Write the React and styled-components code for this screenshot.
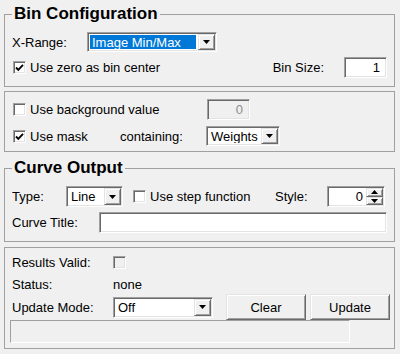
import React from 'react';
import styled, { createGlobalStyle, css } from 'styled-components';

const Global = createGlobalStyle`
  html, body { margin: 0; padding: 0; background: #f0f0f0; }
  body { font-family: "Liberation Sans", Arial, sans-serif; font-size: 13px; color: #000; }
`;

const sunken = css`
  box-sizing: border-box;
  border: 1px solid;
  border-color: #a0a0a0 #fff #fff #a0a0a0;
  box-shadow: inset 1px 1px 0 #696969, inset -1px -1px 0 #e3e3e3;
`;

const raised = css`
  box-sizing: border-box;
  border: 1px solid;
  border-color: #e3e3e3 #696969 #696969 #e3e3e3;
  box-shadow: inset 1px 1px 0 #fff, inset -1px -1px 0 #a0a0a0;
  background: #f0f0f0;
`;

const Page = styled.div`
  width: 400px;
  height: 354px;
  box-sizing: border-box;
  padding: 0 5px 0 4px;
  display: flex;
  flex-direction: column;
  background: #f0f0f0;
  overflow: hidden;
`;

const Group = styled.fieldset`
  margin: ${p => p.$mt}px 0 0 0;
  border: 1px solid #a0a0a0;
  padding: ${p => p.$pt || 0}px ${p => p.$pr ?? 7}px ${p => p.$pb}px 7px;
  min-inline-size: 0;
  display: flex;
  flex-direction: column;
`;

const Legend = styled.legend`
  padding: 0 2px;
  margin: 0;
  font-weight: bold;
  font-size: 17px;
  line-height: 20px;
`;

const Row = styled.div`
  display: flex;
  align-items: center;
  height: ${p => p.$h}px;
  margin-top: ${p => p.$mt || 0}px;
  flex-shrink: 0;
`;

const Label = styled.span`
  flex-shrink: 0;
  white-space: nowrap;
  width: ${p => (p.$w ? `${p.$w}px` : 'auto')};
  margin-left: ${p => (p.$auto ? 'auto' : '0')};
  margin-right: ${p => p.$mr || 0}px;
`;

const Field = styled.div`
  ${sunken};
  flex-shrink: 0;
  width: ${p => (p.$w ? `${p.$w}px` : 'auto')};
  flex-grow: ${p => (p.$grow ? 1 : 0)};
  height: ${p => p.$h || 21}px;
  background: ${p => (p.$disabled ? '#f0f0f0' : '#fff')};
  color: ${p => (p.$disabled ? '#8d8d8d' : '#000')};
  display: flex;
  align-items: center;
  justify-content: flex-end;
  padding: 0 6px 0 3px;
`;

const ComboBox = styled.div`
  ${sunken};
  flex-shrink: 0;
  width: ${p => p.$w}px;
  height: ${p => p.$h || 20}px;
  background: #fff;
  display: flex;
  align-items: stretch;
  padding: 1px;
`;

const ComboText = styled.span`
  flex: 1;
  display: flex;
  align-items: center;
  padding-left: 2px;
  margin: 1px 2px 1px 1px;
  white-space: nowrap;
  overflow: hidden;
  background: ${p => (p.$selected ? '#0078d7' : 'transparent')};
  color: ${p => (p.$selected ? '#fff' : '#000')};
`;

const DropBtn = styled.span`
  ${raised};
  width: 17px;
  flex-shrink: 0;
  display: flex;
  align-items: center;
  justify-content: center;
`;

const SpinBox = styled.div`
  ${sunken};
  flex-shrink: 0;
  width: ${p => p.$w}px;
  height: 21px;
  background: #fff;
  display: flex;
  align-items: stretch;
  padding: 1px;
`;

const SpinValue = styled.span`
  flex: 1;
  display: flex;
  align-items: center;
  justify-content: flex-end;
  padding-right: 3px;
`;

const SpinBtns = styled.span`
  width: 17px;
  display: flex;
  flex-direction: column;
`;

const SpinBtn = styled.span`
  ${raised};
  flex: 1;
  display: flex;
  align-items: center;
  justify-content: center;
`;

const Button = styled.div`
  ${raised};
  flex-shrink: 0;
  width: 80px;
  height: 26px;
  margin-left: ${p => p.$ml || 0}px;
  display: flex;
  align-items: center;
  justify-content: center;
`;

const Box = styled.span`
  ${sunken};
  width: 13px;
  height: 13px;
  flex-shrink: 0;
  background: ${p => (p.$disabled ? '#f0f0f0' : '#fff')};
  display: flex;
  align-items: center;
  justify-content: center;
`;

const CheckWrap = styled.span`
  display: flex;
  align-items: center;
  gap: 4px;
  flex-shrink: 0;
  white-space: nowrap;
  margin-left: ${p => p.$ml || 0}px;
  width: ${p => (p.$w ? `${p.$w}px` : 'auto')};
`;

const Progress = styled.div`
  box-sizing: border-box;
  flex-shrink: 0;
  height: 23px;
  width: 340px;
  margin-left: -2px;
  border: 1px solid;
  border-color: #a0a0a0 #fff #fff #a0a0a0;
  background: #f0f0f0;
`;

const Tri = ({ up }) => (
  <svg width="7" height="4" viewBox="0 0 7 4">
    <polygon points={up ? '3.5,0 7,4 0,4' : '0,0 7,0 3.5,4'} fill="#000" />
  </svg>
);

const CheckBox = ({ checked, disabled }) => (
  <Box $disabled={disabled}>
    {checked && (
      <svg width="9" height="9" viewBox="0 0 9 9">
        <polyline points="1,4.5 3.3,6.8 8,1.8" fill="none" stroke="#000" strokeWidth="1.9" />
      </svg>
    )}
  </Box>
);

const Check = ({ checked, children, w, ml }) => (
  <CheckWrap $w={w} $ml={ml}>
    <CheckBox checked={checked} />
    <span>{children}</span>
  </CheckWrap>
);

const Combo = ({ w, h, value, selected }) => (
  <ComboBox $w={w} $h={h}>
    <ComboText $selected={selected}>{value}</ComboText>
    <DropBtn>
      <Tri />
    </DropBtn>
  </ComboBox>
);

export default function App() {
  return (
    <>
      <Global />
      <Page>
        <Group $mt={4} $pb={7}>
          <Legend>Bin Configuration</Legend>
          <Row $h={22} $mt={7}>
            <Label $w={75}>X-Range:</Label>
            <Combo w={130} value="Image Min/Max" selected />
          </Row>
          <Row $h={23} $mt={3}>
            <Check checked ml={1}>Use zero as bin center</Check>
            <Label $auto $mr={20}>Bin Size:</Label>
            <Field $w={43}>1</Field>
          </Row>
        </Group>

        <Group $mt={4} $pt={7} $pb={5}>
          <Row $h={21}>
            <Check w={194} ml={1}>Use background value</Check>
            <Field $w={43} $disabled>0</Field>
          </Row>
          <Row $h={20} $mt={6}>
            <Check checked w={107} ml={1}>Use mask</Check>
            <Label $w={86}>containing:</Label>
            <Combo w={74} value="Weights" />
          </Row>
        </Group>

        <Group $mt={6} $pb={8}>
          <Legend>Curve Output</Legend>
          <Row $h={21} $mt={8}>
            <Label $w={54}>Type:</Label>
            <Combo w={57} h={21} value="Line" />
            <Check w={142} ml={10}>Use step function</Check>
            <Label $w={52}>Style:</Label>
            <SpinBox $w={58}>
              <SpinValue>0</SpinValue>
              <SpinBtns>
                <SpinBtn><Tri up /></SpinBtn>
                <SpinBtn><Tri /></SpinBtn>
              </SpinBtns>
            </SpinBox>
          </Row>
          <Row $h={21} $mt={5}>
            <Label $w={87}>Curve Title:</Label>
            <Field $grow $h={21} />
          </Row>
        </Group>

        <Group $mt={5} $pt={6} $pb={5} $pr={4}>
          <Row $h={16}>
            <Label $w={101}>Results Valid:</Label>
            <CheckBox disabled />
          </Row>
          <Row $h={16} $mt={6}>
            <Label $w={101}>Status:</Label>
            <Label>none</Label>
          </Row>
          <Row $h={26} $mt={2}>
            <Label $w={101}>Update Mode:</Label>
            <Combo w={100} h={21} value="Off" />
            <Button $ml={13}>Clear</Button>
            <Button $ml={4}>Update</Button>
          </Row>
          <Progress />
        </Group>
      </Page>
    </>
  );
}
